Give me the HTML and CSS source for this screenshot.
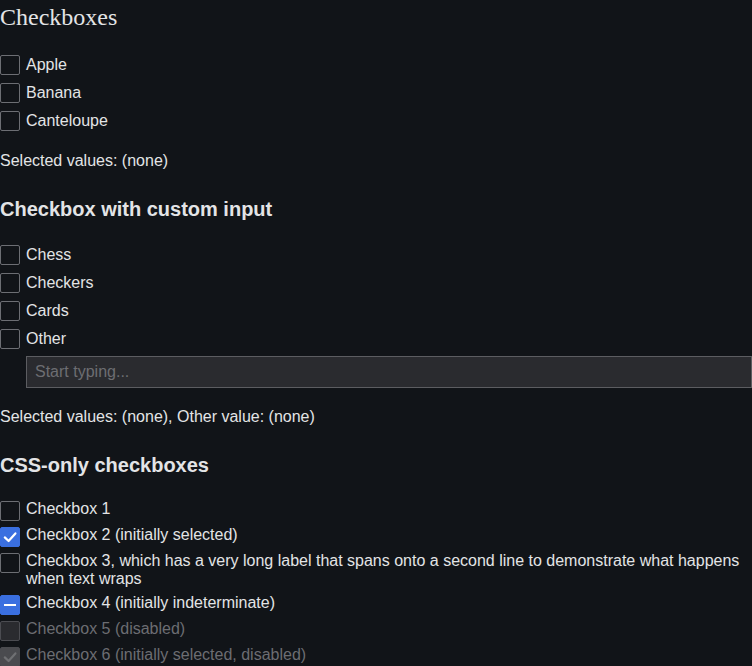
FILE: index.html
```html
<!DOCTYPE html>
<html lang="en">
<head>
<meta charset="utf-8">
<title>Checkboxes</title>
<link rel="stylesheet" href="styles.css">
</head>
<body>
<h2 class="title">Checkboxes</h2>
<div class="list">
  <label class="row"><span class="box"></span><span>Apple</span></label>
  <label class="row"><span class="box"></span><span>Banana</span></label>
  <label class="row"><span class="box"></span><span>Canteloupe</span></label>
</div>
<p class="result">Selected values: (none)</p>

<h3 class="heading">Checkbox with custom input</h3>
<div class="list list-b">
  <label class="row"><span class="box"></span><span>Chess</span></label>
  <label class="row"><span class="box"></span><span>Checkers</span></label>
  <label class="row"><span class="box"></span><span>Cards</span></label>
  <label class="row"><span class="box"></span><span>Other</span></label>
</div>
<input class="other" type="text" placeholder="Start typing...">
<p class="result result-b">Selected values: (none), Other value: (none)</p>

<h3 class="heading">CSS-only checkboxes</h3>
<div class="css-list">
  <label class="css-row"><span class="box"></span><span class="lbl">Checkbox 1</span></label>
  <label class="css-row"><span class="box checked"><svg viewBox="0 0 20 20" width="20" height="20"><path d="M4.8 10.4 L8.6 14 L15.4 6.4" fill="none" stroke="#ffffff" stroke-width="2.2" stroke-linecap="round" stroke-linejoin="round"/></svg></span><span class="lbl">Checkbox 2 (initially selected)</span></label>
  <label class="css-row"><span class="box"></span><span class="lbl">Checkbox 3, which has a very long label that spans onto a second line to demonstrate what happens when text wraps</span></label>
  <label class="css-row"><span class="box checked"><svg viewBox="0 0 20 20" width="20" height="20"><path d="M4 10 L16 10" fill="none" stroke="#ffffff" stroke-width="2.2"/></svg></span><span class="lbl">Checkbox 4 (initially indeterminate)</span></label>
  <label class="css-row disabled"><span class="box off"></span><span class="lbl">Checkbox 5 (disabled)</span></label>
  <label class="css-row disabled"><span class="box off-checked"><svg viewBox="0 0 20 20" width="20" height="20"><path d="M4.8 10.4 L8.6 14 L15.4 6.4" fill="none" stroke="#6f7073" stroke-width="2.2" stroke-linecap="round" stroke-linejoin="round"/></svg></span><span class="lbl">Checkbox 6 (initially selected, disabled)</span></label>
</div>
</body>
</html>
```

FILE: styles.css
```css
html, body {
  background: #111418;
}
body {
  margin: 0;
  padding-top: 3px;
  color: #e3e4e6;
  font-family: "Liberation Sans", Arial, sans-serif;
  font-size: 16px;
  overflow: hidden;
}
.title {
  font-family: "Liberation Serif", "Times New Roman", serif;
  font-weight: normal;
  font-size: 24px;
  line-height: 28px;
  margin: 0 0 24px;
}
.list {
  display: flex;
  flex-direction: column;
  gap: 8px;
}
.list-b {
  margin-top: 24px;
}
.row {
  display: flex;
  align-items: center;
  gap: 6px;
  height: 20px;
  line-height: 18px;
}
.box {
  box-sizing: border-box;
  flex: none;
  width: 20px;
  height: 20px;
  border: 1px solid #6c6e73;
  border-radius: 2px;
  display: flex;
  align-items: center;
  justify-content: center;
  overflow: hidden;
}
.box svg {
  display: block;
  flex: none;
}
.box.checked {
  background: #3a6fe0;
  border-color: #3a6fe0;
}
.box.off {
  background: #2a2b2f;
  border-color: #4b4c51;
}
.box.off-checked {
  background: #4a4b4f;
  border-color: #4a4b4f;
}
.result {
  margin: 21px 0 0;
  line-height: 18px;
}
.result-b {
  margin-top: 20px;
}
.heading {
  margin: 28px 0 0;
  font-size: 20px;
  line-height: 23px;
  font-weight: bold;
}
.other {
  display: block;
  box-sizing: border-box;
  margin: 7px 0 0 26px;
  width: calc(100% - 26px);
  height: 32px;
  padding: 0 8px;
  background: #2a2b2f;
  border: 1px solid #5c5d61;
  border-radius: 0;
  color: #e3e4e6;
  font-family: "Liberation Sans", Arial, sans-serif;
  font-size: 16px;
  outline: none;
}
.other::placeholder {
  color: #6d6e72;
}
.css-list {
  margin-top: 23px;
  display: flex;
  flex-direction: column;
  gap: 5px;
}
.css-row {
  display: flex;
  align-items: flex-start;
  gap: 6px;
  line-height: 18px;
}
.css-row .box {
  margin-top: 1px;
}
.css-row .lbl {
  padding-bottom: 1px;
}
.css-row.disabled {
  color: #6c6d72;
}
```
